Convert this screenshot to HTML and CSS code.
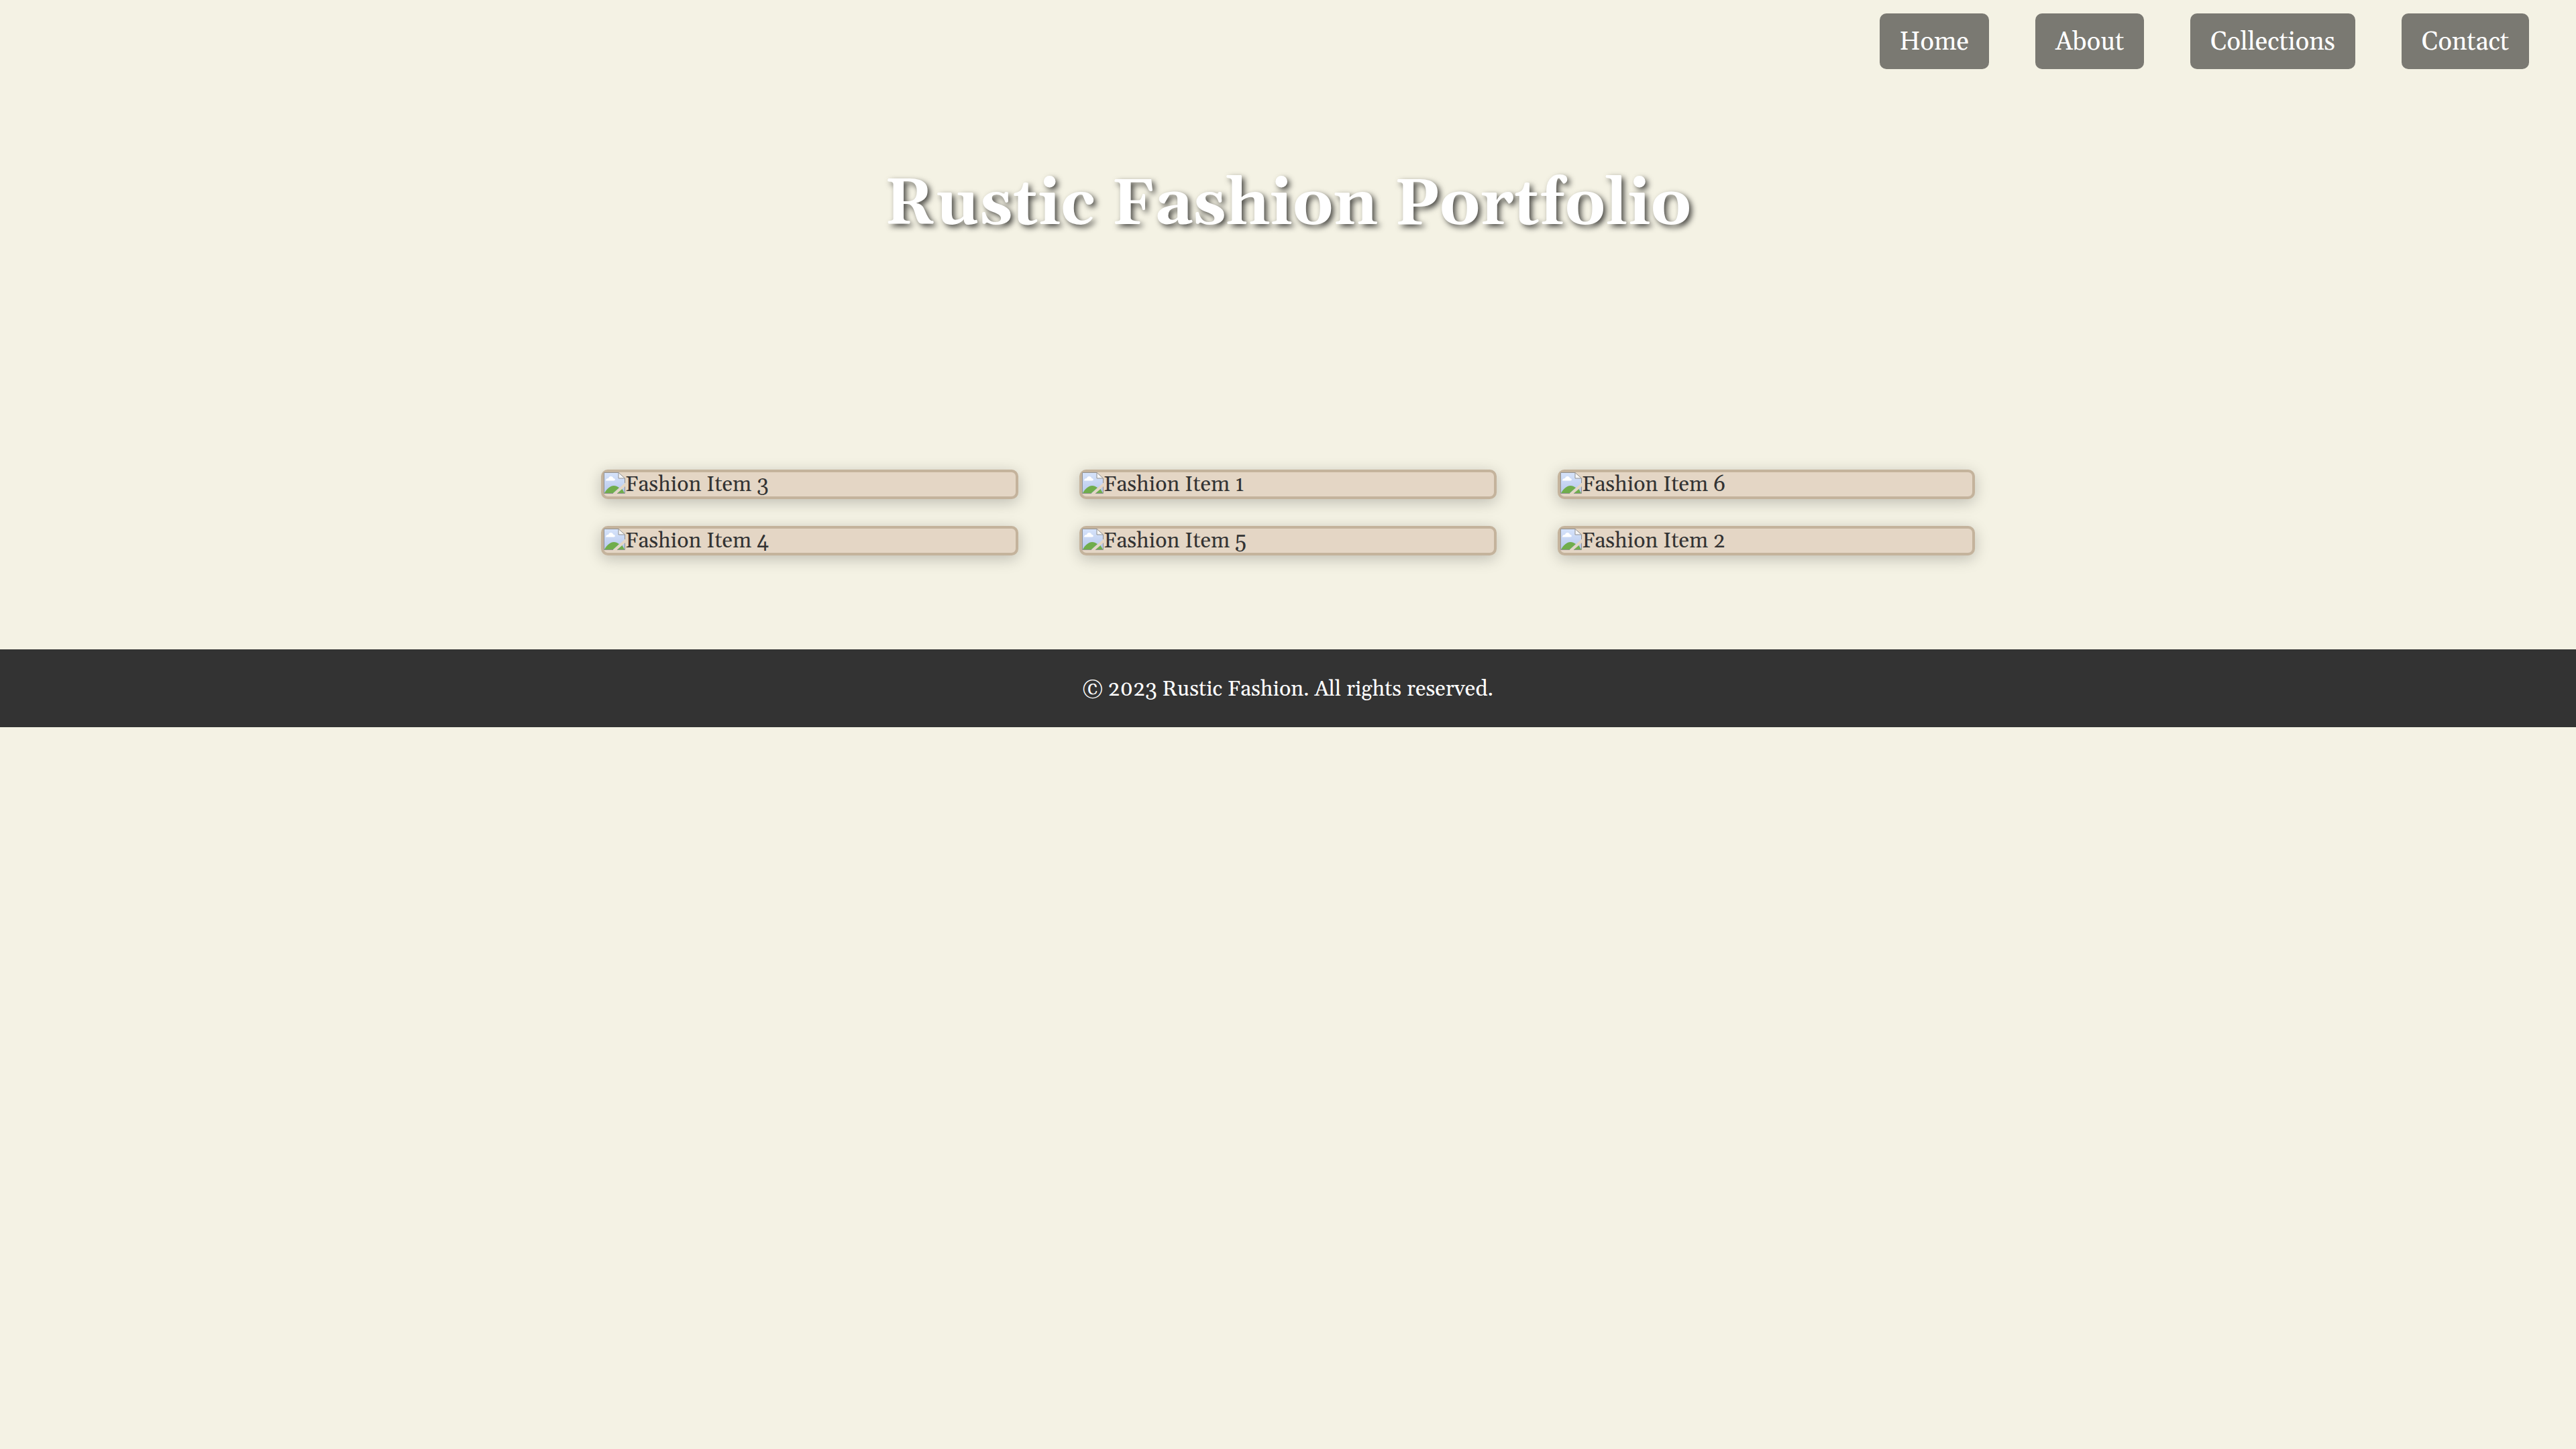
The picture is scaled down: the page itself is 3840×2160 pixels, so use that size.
FILE: index.html
```html
<!DOCTYPE html>
<html lang="en">
<head>
<meta charset="utf-8">
<title>Rustic Fashion Portfolio</title>
<link rel="stylesheet" href="styles.css">
</head>
<body>
<svg class="sprite" width="0" height="0" aria-hidden="true">
  <defs>
    <linearGradient id="sky" x1="0" y1="0" x2="0" y2="1">
      <stop offset="0" stop-color="#d6e3fa"/>
      <stop offset="1" stop-color="#b7c8ec"/>
    </linearGradient>
  </defs>
  <symbol id="photo" viewBox="0 0 32 32">
    <path d="M.5.5H22L31.500 9V16L14 31.500H.5Z" fill="url(#sky)"/>
    <path d="M3 12.500C3 10 5 9 7 9C8 5 13 5 14.500 9C17 9 18 12.500 15 12.500Z" fill="#fff"/>
    <path d="M1 31C5 24 10 20 15 20C18 20 20 21 23 23L14 31Z" fill="#70ad4c"/>
    <path d="M20.500 31L31.500 21.500V31Z" fill="#b7c8ec"/>
    <path d="M20.500 31L27.500 25L31 31Z" fill="#70ad4c"/>
    <path d="M22 .5V9H31.500Z" fill="#f7f7f7"/>
    <path d="M14 31.500H.5V.5H22L31.500 9V16M22 .5V9H31.500M31.500 21.500V31.500H20" fill="none" stroke="#919191"/>
  </symbol>
</svg>
<header class="header">
  <nav class="nav">
    <a class="nav-link" href="#home">Home</a>
    <a class="nav-link" href="#about">About</a>
    <a class="nav-link" href="#collections">Collections</a>
    <a class="nav-link" href="#contact">Contact</a>
  </nav>
  <h1 class="title">Rustic Fashion Portfolio</h1>
</header>
<main class="gallery">
  <figure class="card"><svg class="icon" aria-hidden="true"><use href="#photo"/></svg><figcaption>Fashion Item 3</figcaption></figure>
  <figure class="card"><svg class="icon" aria-hidden="true"><use href="#photo"/></svg><figcaption>Fashion Item 1</figcaption></figure>
  <figure class="card"><svg class="icon" aria-hidden="true"><use href="#photo"/></svg><figcaption>Fashion Item 6</figcaption></figure>
  <figure class="card"><svg class="icon" aria-hidden="true"><use href="#photo"/></svg><figcaption>Fashion Item 4</figcaption></figure>
  <figure class="card"><svg class="icon" aria-hidden="true"><use href="#photo"/></svg><figcaption>Fashion Item 5</figcaption></figure>
  <figure class="card"><svg class="icon" aria-hidden="true"><use href="#photo"/></svg><figcaption>Fashion Item 2</figcaption></figure>
</main>
<footer class="footer">© 2023 Rustic Fashion. All rights reserved.</footer>
</body>
</html>
```
FILE: styles.css
```css
* { box-sizing: border-box; }
body {
  margin: 0;
  background: #f4f2e4;
  color: #333;
  font-family: Georgia, Gelasio, "Liberation Serif", serif;
  font-size: 32px;
  line-height: 36px;
}
.sprite { display: block; }
.nav {
  display: flex;
  justify-content: flex-end;
  gap: 69px;
  padding: 20px 70px;
}
.nav-link {
  padding: 22px 30px 18px;
  border-radius: 10px;
  background: rgba(0, 0, 0, 0.5);
  color: #fff;
  font-size: 38px;
  line-height: 43px;
  text-decoration: none;
}
.title {
  margin: 125px 0 336px;
  color: #fff;
  font-size: 96px;
  line-height: 116px;
  text-align: center;
  text-shadow: 4px 4px 8px rgba(0, 0, 0, 0.7);
}
.gallery {
  display: grid;
  grid-template-columns: repeat(3, 1fr);
  gap: 40px 91px;
  max-width: 2048px;
  margin: 0 auto 140px;
}
.card {
  display: flex;
  margin: 0;
  border: 4px solid #c4b39c;
  border-radius: 10px;
  background: #e4d6c5;
  box-shadow: 0 5px 22px rgba(0, 0, 0, 0.22);
  line-height: 34px;
}
.card figcaption { padding-top: 2px; }
.icon {
  width: 32px;
  height: 32px;
}
.footer {
  padding: 42px 40px 38px;
  background: #333;
  color: #fff;
  text-align: center;
}
```
